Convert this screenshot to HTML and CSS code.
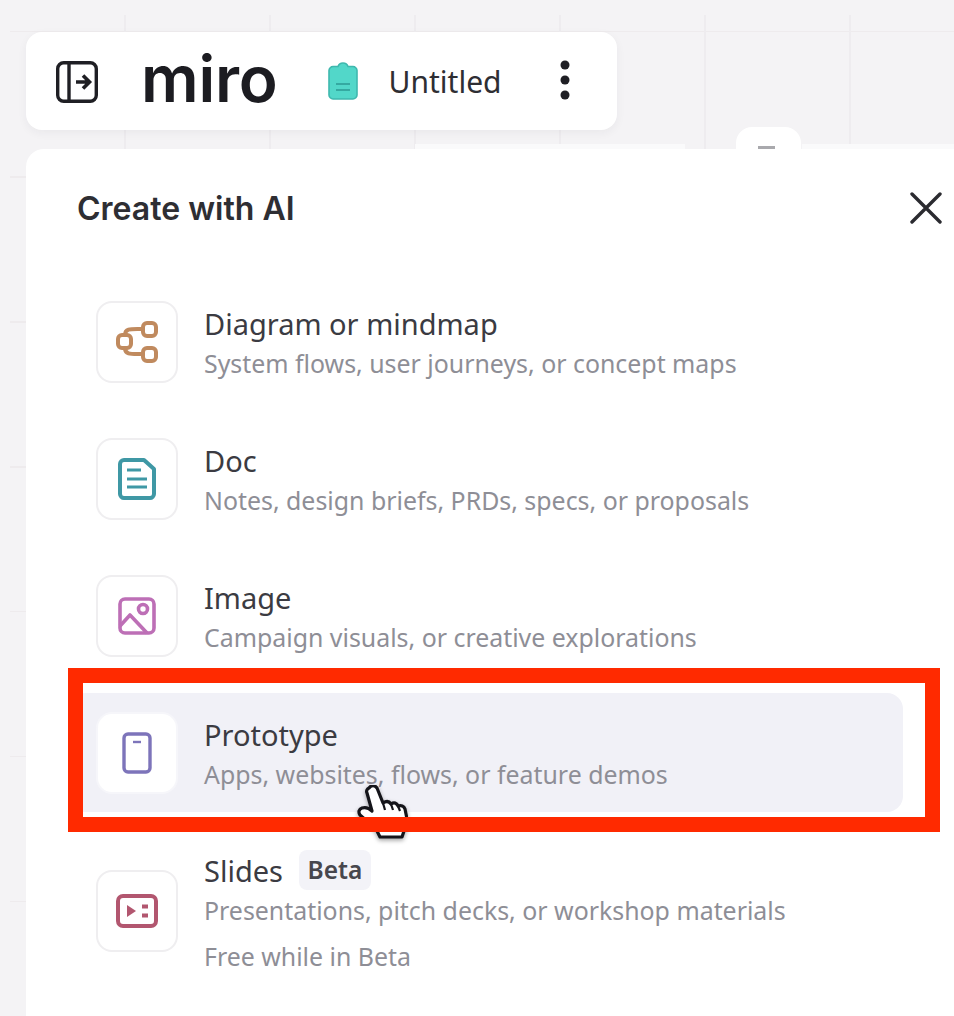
FILE: index.html
```html
<!DOCTYPE html>
<html lang="en">
<head>
<meta charset="utf-8">
<title>Create with AI</title>
<link rel="stylesheet" href="styles.css">
</head>
<body>
<div class="grid-lines"></div>
<div class="behind-strip behind-strip-a"></div>
<div class="behind-strip behind-strip-b"></div>
<div class="behind-tab"><span class="behind-dash"></span></div>
<main class="stage">
  <header class="topbar">
    <svg class="panel-icon" viewBox="0 0 42 42" fill="none" stroke="#1f1f24" stroke-width="3.400"><rect x="1.700" y="1.700" width="38.600" height="38.600" rx="6"/><path d="M13 2v38"/><path d="M20 21h13M27 14.500l6.500 6.500-6.500 6.500" stroke-width="3.600"/></svg>
    <span class="logo">miro</span>
    <svg class="board-icon" viewBox="0 0 30 38"><path d="M5 4.500h5c1-3 3-3.500 5-3.500s4 .5 5 3.500h5c2 0 4 2 4 4V33c0 2-2 4-4 4H5c-2 0-4-2-4-4V8.500c0-2 2-4 4-4z" fill="#52d7c9" stroke="#3fb8ae" stroke-width="1.600"/><path d="M8 22h14M8 28h14" stroke="#2e9e98" stroke-width="2" opacity=".8"/></svg>
    <span class="board-name">Untitled</span>
    <svg class="more-icon" viewBox="0 0 10 40" fill="#1f1f24"><circle cx="5" cy="5" r="4.500"/><circle cx="5" cy="20" r="4.500"/><circle cx="5" cy="35" r="4.500"/></svg>
  </header>
  <section class="panel">
    <div class="panel-head">
      <h1 class="panel-title">Create with AI</h1>
      <svg class="close-icon" viewBox="0 0 32 32" fill="none" stroke="#2b2b30" stroke-width="3.400" stroke-linecap="round"><path d="M2 2l28 28M30 2L2 30"/></svg>
    </div>
    <ul class="rows">
      <li class="row">
        <span class="tile"><svg class="glyph" viewBox="0 0 42 42" fill="none" stroke="#c08a5e" stroke-width="4" stroke-linejoin="round"><rect x="2" y="14" width="13" height="13" rx="4"/><rect x="27" y="2" width="13" height="13" rx="4"/><rect x="27" y="27" width="13" height="13" rx="4"/><path d="M9 14c0-7 6-6 18-6M9 27c0 7 6 6 18 6"/></svg></span>
        <div class="copy"><div class="name">Diagram or mindmap</div><div class="desc">System flows, user journeys, or concept maps</div></div>
      </li>
      <li class="row">
        <span class="tile"><svg class="glyph glyph-doc" viewBox="0 0 38 42" fill="none" stroke="#3f98a5" stroke-width="4" stroke-linejoin="round"><path d="M6 2h20l10 9v25c0 2-2 4-4 4H6c-2 0-4-2-4-4V6c0-2 2-4 4-4z"/><path d="M9 12h14M9 21h20M9 29h20" stroke-width="3"/></svg></span>
        <div class="copy"><div class="name">Doc</div><div class="desc">Notes, design briefs, PRDs, specs, or proposals</div></div>
      </li>
      <li class="row">
        <span class="tile"><svg class="glyph glyph-image" viewBox="0 0 38 38" fill="none" stroke="#bd6fb6" stroke-width="3.600" stroke-linejoin="round"><rect x="2" y="2" width="34" height="34" rx="5"/><circle cx="25" cy="12" r="4.500"/><path d="M2 29l10-11 17 18"/></svg></span>
        <div class="copy"><div class="name">Image</div><div class="desc">Campaign visuals, or creative explorations</div></div>
      </li>
      <li class="row row-active">
        <span class="tile tile-plain"><svg class="glyph glyph-phone" viewBox="0 0 30 42" fill="none" stroke="#7d74ba" stroke-width="3.400"><rect x="2" y="2" width="26" height="38" rx="4"/><path d="M11 10h8" stroke-width="2.400"/></svg></span>
        <div class="copy"><div class="name">Prototype</div><div class="desc">Apps, websites, flows, or feature demos</div></div>
      </li>
      <li class="row row-tall">
        <span class="tile"><svg class="glyph glyph-slides" viewBox="0 0 42 34" fill="none" stroke="#b2566f" stroke-width="4"><rect x="2" y="2" width="38" height="30" rx="5"/><path d="M11 11l9 6-9 6z" fill="#b2566f" stroke="none"/><path d="M26 12.500h6M26 21.500h6" stroke-width="4"/></svg></span>
        <div class="copy"><div class="name">Slides <span class="badge">Beta</span></div><div class="desc">Presentations, pitch decks, or workshop materials</div><div class="desc note">Free while in Beta</div></div>
      </li>
    </ul>
  </section>
</main>
<svg class="hand" viewBox="0 0 51 54"><path d="M12 3c2-3 6-3 8 0l6 15c3-2 6-2 8 1 3-2 6-1 7 2 3-1 6 0 7 3l2 10c1 5-1 9-3 12l-2 6H23l-4-8L3 30c-2-3-1-6 2-7 3-1 7 0 10 3l-5-18c-1-2 0-4 2-5z" fill="#fff" stroke="#15151a" stroke-width="3.200" stroke-linejoin="round"/><path d="M26 18l2 7M34 19l2 6M41 21l2 5M26 32v3M33 32v3M40 32v3" stroke="#15151a" stroke-width="2.200" fill="none"/></svg>
<div class="callout"></div>
</body>
</html>
```
FILE: styles.css
```css
* { box-sizing: border-box; }
html, body { margin: 0; height: 100%; }
body {
  width: 954px;
  height: 1016px;
  position: relative;
  overflow: hidden;
  background: #f4f3f5;
  font-family: "Noto Sans", "Open Sans", sans-serif;
  color: #3b3b42;
}
.grid-lines {
  position: absolute;
  left: 10px;
  top: 15px;
  right: 0;
  bottom: 0;
  background-image:
    repeating-linear-gradient(to right, transparent 0 114px, #eeecef 114px 115.500px, transparent 115.500px 145px),
    repeating-linear-gradient(to bottom, transparent 0 16px, #eeebed 16px 17.500px, transparent 17.500px 145px);
  background-repeat: no-repeat;
}
.behind-strip { position: absolute; top: 144px; height: 5px; background: #fafafb; }
.behind-strip-a { left: 415px; width: 270px; }
.behind-strip-b { left: 802px; right: 0; }
.behind-tab {
  position: absolute;
  left: 736px;
  top: 127px;
  width: 65px;
  height: 40px;
  border-radius: 16px 16px 0 0;
  background: #fff;
}
.behind-dash { display: block; width: 17px; height: 3px; margin: 19px 0 0 22px; background: #a9a9ad; }
.stage {
  position: relative;
  padding: 32px 0 0 26px;
  display: flex;
  flex-direction: column;
  gap: 19px;
}
.topbar {
  width: 591px;
  height: 98px;
  border-radius: 16px;
  background: #fff;
  box-shadow: 0 3px 10px rgba(40, 40, 60, .05);
  display: flex;
  align-items: center;
  padding-left: 30px;
}
.panel-icon { width: 42px; height: 42px; flex: none; margin-top: 1px; }
.logo {
  margin-left: 43px;
  font-family: "Inter", sans-serif;
  font-weight: 600;
  font-size: 64px;
  line-height: 70px;
  letter-spacing: -.2px;
  color: #1c1c21;
  margin-top: -5px;
}
.board-icon { width: 30px; height: 38px; flex: none; margin-left: 50px; }
.board-name { margin-left: 31px; font-size: 30px; color: #2e2e33; line-height: 40px; margin-top: 2px; }
.more-icon { width: 10px; height: 40px; flex: none; margin-left: 58px; margin-top: -3px; }
.panel {
  width: 960px;
  height: 900px;
  background: #fff;
  border-radius: 18px 0 0 0;
  padding: 36px 0 0 44px;
}
.panel-head { display: flex; align-items: center; justify-content: space-between; width: 872px; padding-left: 7px; height: 46px; }
.panel-title { margin: 2px 0 0; font-family: "Inter", sans-serif; font-weight: 600; font-size: 32px; line-height: 44px; color: #2e2e33; }
.close-icon { width: 32px; height: 32px; flex: none; }
.rows { list-style: none; margin: 51px 0 0; padding: 0; display: flex; flex-direction: column; gap: 18px; width: 833px; }
.row { display: flex; align-items: flex-start; gap: 26px; padding: 19px 26px 18px; border-radius: 16px; }
.row-active { background: #f1f1f7; }
.row-tall .tile { margin-top: 21px; }
.tile {
  width: 82px;
  height: 82px;
  flex: none;
  display: flex;
  align-items: center;
  justify-content: center;
  background: #fff;
  border: 2px solid #efeef0;
  border-radius: 16px;
}
.tile-plain { border-color: #f6f6fa; }
.glyph { width: 42px; height: 42px; }
.glyph-doc { width: 38px; height: 42px; }
.glyph-image { width: 38px; height: 38px; }
.glyph-phone { width: 30px; height: 42px; }
.glyph-slides { width: 42px; height: 34px; }
.copy { padding-top: 2px; }
.row-tall .copy { padding-top: 1px; }
.name { font-size: 29px; line-height: 41px; color: #3b3b42; height: 40px; }
.desc { font-size: 24.900px; line-height: 40px; color: #8e8e96; }
.note { margin-top: 6px; }
.badge {
  display: inline-block;
  margin-left: 8px;
  padding: 0 9px;
  height: 40px;
  vertical-align: top;
  font-size: 24.500px;
  line-height: 40px;
  font-weight: 600;
  color: #47474e;
  background: #f3f3f8;
  border-radius: 8px;
}
.hand { position: absolute; left: 357px; top: 785px; width: 51px; height: 54px; filter: drop-shadow(0 2px 2px rgba(0,0,0,.35)); }
.callout {
  position: absolute;
  left: 68px;
  top: 668px;
  width: 872px;
  height: 164px;
  border: 15px solid #ff2a00;
}
```
